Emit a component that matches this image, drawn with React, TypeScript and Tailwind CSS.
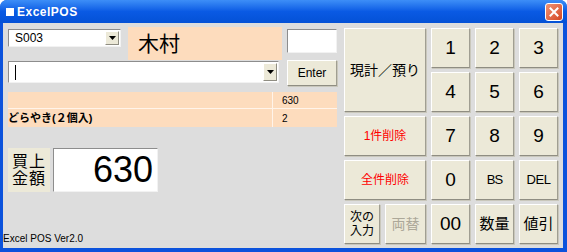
import React from 'react'

const jp = "font-['Liberation_Sans','Noto_Sans_CJK_JP',sans-serif]"

function Btn({ children, className = '' }: { children: React.ReactNode; className?: string }) {
  return (
    <div
      className={`flex items-center justify-center bg-[#ece9d8] border border-t-white border-l-white border-r-[#a09e92] border-b-[#8f8d82] shadow-[1px_1px_0_#c9c7bb] ${className}`}
    >
      {children}
    </div>
  )
}

function Combo({ w, children }: { w: string; children?: React.ReactNode }) {
  return (
    <div className={`flex items-stretch bg-white border border-t-[#8d8d8d] border-l-[#8d8d8d] border-r-[#f2f2f2] border-b-[#f2f2f2] ${w}`}>
      <div className="flex-1 flex items-center pl-[6px] text-[12px] text-black">{children}</div>
      <div className="m-[1px] w-[14px] flex items-center justify-center bg-[#ece9d8] border border-t-white border-l-white border-r-[#8f8d82] border-b-[#8f8d82]">
        <svg width="7" height="4" viewBox="0 0 7 4">
          <path d="M0 0h7L3.5 4z" fill="#000" />
        </svg>
      </div>
    </div>
  )
}

export default function App() {
  const keys: { label: string; cls?: string }[][] = [
    [{ label: '1' }, { label: '2' }, { label: '3' }],
    [{ label: '4' }, { label: '5' }, { label: '6' }],
  ]

  return (
    <div className={`w-[567px] h-[252px] flex flex-col bg-[#0b52dc] rounded-t-[7px] overflow-hidden ${jp}`}>
      {/* title bar */}
      <div className="h-[23px] flex items-center bg-gradient-to-b from-[#3d8ef7] via-[#0a5ae4] to-[#0451d6] pl-[6px] pr-[4px]">
        <div className="w-[8px] h-[8px] bg-white" />
        <span className="ml-[3px] text-[12px] font-bold text-white tracking-[0.5px]">ExcelPOS</span>
        <div className="ml-auto w-[18px] h-[18px] rounded-[3px] border border-white bg-gradient-to-br from-[#ef9274] to-[#d4451f] flex items-center justify-center">
          <svg width="10" height="10" viewBox="0 0 10 10">
            <path d="M1.5 1.5l7 7M8.5 1.5l-7 7" stroke="#fff" strokeWidth="2" strokeLinecap="square" />
          </svg>
        </div>
      </div>

      {/* client */}
      <div className="flex-1 mx-[3px] mr-[4px] mb-[4px] bg-[#dddddd] flex">
        {/* left */}
        <div className="w-[334px] flex flex-col">
          <div className="ml-[5px] mt-[4px] flex h-[33px]">
            <div className="mt-[2px] h-[18px] flex">
              <Combo w="w-[113px]">S003</Combo>
            </div>
            <div className="ml-[7px] w-[154px] h-[33px] bg-[#fddcbd] flex items-center pl-[10px] text-[21px] text-black">
              木村
            </div>
            <div className="ml-[5px] mt-[2px] w-[50px] h-[24px] bg-white border border-t-[#8d8d8d] border-l-[#8d8d8d] border-r-[#f2f2f2] border-b-[#f2f2f2]" />
          </div>

          <div className="ml-[5px] flex h-[26px]">
            <div className="mt-[1px] h-[22px] flex">
              <Combo w="w-[271px]">
                <div className="w-px h-[15px] bg-black" />
              </Combo>
            </div>
            <Btn className="ml-[8px] w-[50px] h-[26px] text-[12px] text-black">Enter</Btn>
          </div>

          <div className="ml-[5px] mt-[6px] w-[329px] grid grid-cols-[264px_64px] gap-px bg-[#fff4ea] text-[10px] text-black">
            <div className="h-[16px] bg-[#fddcbd]" />
            <div className="h-[16px] bg-[#fddcbd] pl-[9px] flex items-center">630</div>
            <div className="h-[18px] bg-[#fddcbd] flex items-center font-bold text-[11px]">どらやき(２個入)</div>
            <div className="h-[18px] bg-[#fddcbd] pl-[9px] flex items-center">2</div>
          </div>

          <div className="ml-[5px] mt-[21px] flex h-[44px]">
            <div className="w-[42px] h-[44px] bg-[#ece9d8] flex flex-col items-center justify-center text-[16px] leading-[17px] text-black tracking-[1px]">
              <span>買上</span>
              <span>金額</span>
            </div>
            <div className="ml-[3px] w-[105px] h-[44px] bg-white border border-t-[#8d8d8d] border-l-[#8d8d8d] border-r-[#f2f2f2] border-b-[#f2f2f2] flex items-center justify-end pr-[4px] text-[36px] text-black">
              630
            </div>
          </div>

          <div className="mt-auto mb-[4px] text-[10px] text-black leading-none">Excel POS Ver2.0</div>
        </div>

        {/* right keypad */}
        <div className="ml-[7px] mt-[5px] grid grid-cols-[82px_39px_39px_39px] grid-rows-[40px_40px_40px_40px_40px] gap-x-[5px] gap-y-[4px] h-fit">
          <Btn className="row-span-2 text-[14px] text-black">現計／預り</Btn>
          {keys[0].map((k) => (
            <Btn key={k.label} className="text-[19px] text-black">{k.label}</Btn>
          ))}
          {keys[1].map((k) => (
            <Btn key={k.label} className="text-[19px] text-black">{k.label}</Btn>
          ))}
          <Btn className="text-[12px] text-[#f00]">1件削除</Btn>
          <Btn className="text-[19px] text-black">7</Btn>
          <Btn className="text-[19px] text-black">8</Btn>
          <Btn className="text-[19px] text-black">9</Btn>
          <Btn className="text-[12px] text-[#f00]">全件削除</Btn>
          <Btn className="text-[19px] text-black">0</Btn>
          <Btn className="text-[13px] text-black tracking-[-1px]">BS</Btn>
          <Btn className="text-[13px] text-black tracking-[-0.5px]">DEL</Btn>
          <div className="flex gap-[5px]">
            <Btn className="w-[36px] flex-col text-[12px] text-black">
              <span className="block leading-[14px] h-[14px]">次の</span>
              <span className="block leading-[14px] h-[14px]">入力</span>
            </Btn>
            <Btn className="flex-1 text-[14px] text-[#aca899]">両替</Btn>
          </div>
          <Btn className="text-[19px] text-black">00</Btn>
          <Btn className="text-[15px] text-black">数量</Btn>
          <Btn className="text-[15px] text-black">値引</Btn>
        </div>
      </div>
    </div>
  )
}
